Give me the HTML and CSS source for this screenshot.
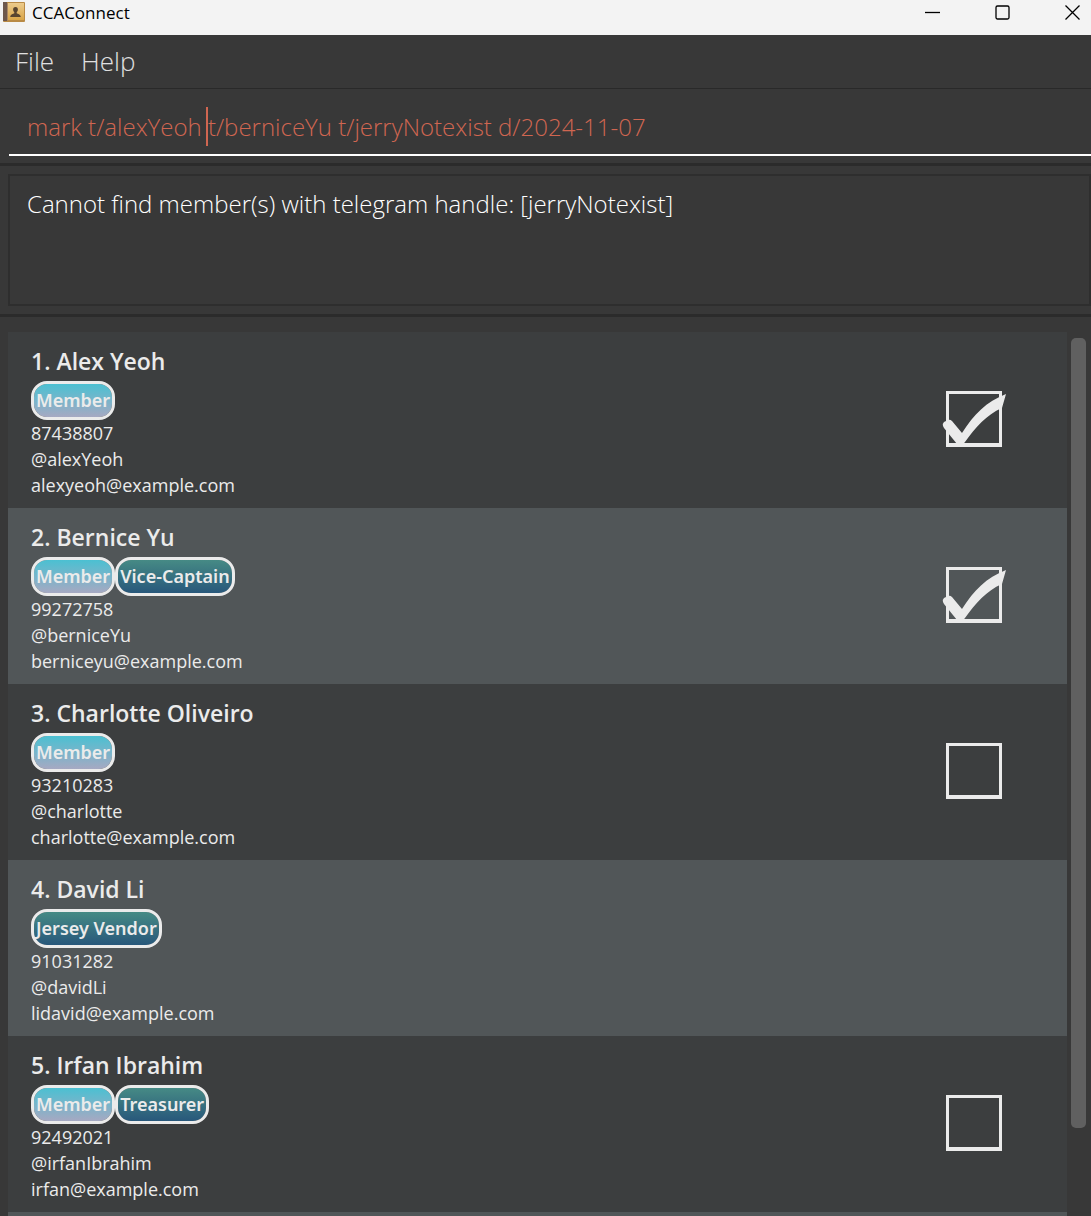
FILE: index.html
```html
<!DOCTYPE html>
<html lang="en">
<head>
<meta charset="utf-8">
<title>CCAConnect</title>
<link rel="stylesheet" href="styles.css">
</head>
<body>
<header class="titlebar">
  <svg class="app-icon" viewBox="0 0 22 20" aria-hidden="true">
    <defs><linearGradient id="cover" x1="0" y1="0" x2="0" y2="1"><stop offset="0" stop-color="#eccb8c"/><stop offset="1" stop-color="#d9a548"/></linearGradient></defs>
    <rect x="0" y="0" width="22" height="20" rx="1" fill="#b98a45"/>
    <rect x="0" y="0" width="4" height="19" fill="#6d574b"/>
    <rect x="4" y="1" width="1" height="18" fill="#a98763"/>
    <rect x="5" y="1" width="16" height="17" fill="url(#cover)"/>
    <path d="M12.500 5c1.700 0 2.500 1.200 2.400 2.700-.1 1.300-.7 2-1.200 2.500v1c1 .6 3.800.8 4.100 3.800H7.200c.3-3 3.100-3.200 4.100-3.800v-1c-.5-.5-1.100-1.200-1.200-2.500C10 6.200 10.800 5 12.500 5z" fill="#59452f"/>
  </svg>
  <h1 class="app-title">CCAConnect</h1>
  <div class="window-controls">
    <button type="button" aria-label="Minimize"><svg viewBox="0 0 16 16"><path d="M0 8.500h15"/></svg></button>
    <button type="button" aria-label="Maximize"><svg viewBox="0 0 16 16"><rect x="1" y="2" width="13" height="13" rx="1.500"/></svg></button>
    <button type="button" aria-label="Close"><svg viewBox="0 0 16 16"><path d="M.5 1.500l14 14M14.500 1.500l-14 14"/></svg></button>
  </div>
</header>
<nav class="menubar">
  <button type="button">File</button>
  <button type="button">Help</button>
</nav>
<section class="command">
  <div class="command-field">
    <input class="command-input" type="text" aria-label="Command" spellcheck="false" value="mark t/alexYeoh t/berniceYu t/jerryNotexist d/2024-11-07">
    <span class="caret"></span>
  </div>
</section>
<section class="result">
  <textarea class="result-text" aria-label="Result" readonly>Cannot find member(s) with telegram handle: [jerryNotexist]</textarea>
</section>
<main class="people">
  <ol class="list">
    <li class="person">
      <div class="details">
        <h2>1. Alex Yeoh</h2>
        <div class="tags"><span class="tag member">Member</span></div>
        <p>87438807</p><p>@alexYeoh</p><p>alexyeoh@example.com</p>
      </div>
      <label class="attendance"><input type="checkbox" aria-label="Alex Yeoh attended" checked><svg viewBox="0 0 66 58" aria-hidden="true"><path d="M1 35Q0 33 2 31L6 29Q8 28 10 30L20 42C32 23 44 11 64 3L60 17C44 24 34 36 23 51Q19 57 15 53L2 37z"/></svg></label>
    </li>
    <li class="person">
      <div class="details">
        <h2>2. Bernice Yu</h2>
        <div class="tags"><span class="tag member">Member</span><span class="tag">Vice-Captain</span></div>
        <p>99272758</p><p>@berniceYu</p><p>berniceyu@example.com</p>
      </div>
      <label class="attendance"><input type="checkbox" aria-label="Bernice Yu attended" checked><svg viewBox="0 0 66 58" aria-hidden="true"><path d="M1 35Q0 33 2 31L6 29Q8 28 10 30L20 42C32 23 44 11 64 3L60 17C44 24 34 36 23 51Q19 57 15 53L2 37z"/></svg></label>
    </li>
    <li class="person">
      <div class="details">
        <h2>3. Charlotte Oliveiro</h2>
        <div class="tags"><span class="tag member">Member</span></div>
        <p>93210283</p><p>@charlotte</p><p>charlotte@example.com</p>
      </div>
      <label class="attendance"><input type="checkbox" aria-label="Charlotte Oliveiro attended"></label>
    </li>
    <li class="person">
      <div class="details">
        <h2>4. David Li</h2>
        <div class="tags"><span class="tag">Jersey Vendor</span></div>
        <p>91031282</p><p>@davidLi</p><p>lidavid@example.com</p>
      </div>
    </li>
    <li class="person">
      <div class="details">
        <h2>5. Irfan Ibrahim</h2>
        <div class="tags"><span class="tag member">Member</span><span class="tag">Treasurer</span></div>
        <p>92492021</p><p>@irfanIbrahim</p><p>irfan@example.com</p>
      </div>
      <label class="attendance"><input type="checkbox" aria-label="Irfan Ibrahim attended"></label>
    </li>
    <li class="person"></li>
  </ol>
  <div class="scrollbar"><div class="thumb"></div></div>
</main>
</body>
</html>
```

FILE: styles.css
```css
* { box-sizing: border-box; }

body {
  margin: 0;
  height: 100vh;
  overflow: hidden;
  display: flex;
  flex-direction: column;
  background: #383838;
  color: #ebebeb;
  font-family: "Open Sans", "Noto Sans", sans-serif;
}

h1, h2, p, ol { margin: 0; padding: 0; }
button, input, textarea { font-family: inherit; }
button { border: 0; padding: 0; background: none; color: inherit; }

.titlebar {
  flex: none;
  display: flex;
  align-items: flex-start;
  height: 35px;
  padding: 2px 0 0 3px;
  background: #f3f3f3;
  color: #000;
}
.app-icon { width: 22px; height: 20px; }
.app-title { margin-left: 7px; font-size: 17px; font-weight: 400; line-height: 22px; }
.window-controls { display: flex; gap: 54px; margin-left: auto; padding: 2px 10px 0 0; }
.window-controls button { width: 16px; height: 16px; }
.window-controls svg { display: block; width: 16px; height: 16px; fill: none; stroke: #000; stroke-width: 1.300; }

.menubar {
  flex: none;
  display: flex;
  align-items: flex-start;
  gap: 27px;
  height: 54px;
  padding: 0 15px;
  border-bottom: 1px solid #292929;
}
.menubar button { font-size: 26px; font-weight: 300; line-height: 52px; color: #e0e0e0; }

.command {
  flex: none;
  padding: 9px 0 7px 9px;
  border-bottom: 3px solid #2b2b2b;
}
.command-field { position: relative; }
.command-input {
  display: block;
  width: 100%;
  height: 58px;
  padding: 0 18px;
  border: 0;
  border-bottom: 2px solid #fff;
  outline: 0;
  background: none;
  color: #d06651;
  font-size: 24px;
  font-weight: 300;
}
.caret { position: absolute; left: 197px; top: 9px; width: 2px; height: 39px; background: #d06651; }

.result {
  flex: none;
  padding: 8px 0 8px 8px;
  border-bottom: 3px solid #2b2b2b;
}
.result-text {
  display: block;
  width: 100%;
  height: 132px;
  padding: 11px 17px;
  border: 2px solid #2e2e2e;
  outline: 0;
  resize: none;
  background: none;
  color: #fff;
  font-size: 24px;
  font-weight: 300;
  line-height: 34px;
}

.people { flex: 1; min-height: 0; display: flex; padding: 15px 5px 0 8px; }
.list { flex: 1; list-style: none; overflow: hidden; }
.person {
  display: flex;
  justify-content: space-between;
  min-height: 176px;
  padding: 13px 61px 10px 23px;
  background: #3c3e3f;
}
.person:nth-child(even) { background: #515658; }
.person h2 { font-size: 23px; font-weight: 600; line-height: 32px; margin-bottom: 4px; }
.person p { font-size: 18px; line-height: 26px; }
.tags { display: flex; }
.tag {
  height: 39px;
  padding: 0 2px;
  border: 3px solid #ebebeb;
  border-radius: 16px;
  background: linear-gradient(#468a85, #28587b) padding-box;
  font-family: "Noto Sans", sans-serif;
  font-size: 18px;
  font-weight: 600;
  line-height: 32px;
}
.tag.member { background: linear-gradient(#4bc0d2, #a6a9c2) padding-box; }

.attendance { position: relative; width: 60px; height: 58px; margin-top: 46px; }
.attendance input {
  appearance: none;
  display: block;
  width: 56px;
  height: 56px;
  margin: 0;
  border: 4px solid #ebebeb;
  border-width: 3px 3px 4px;
}
.attendance svg { position: absolute; left: -4px; top: 0; width: 66px; height: 58px; fill: #ebebeb; }

.scrollbar { width: 15px; margin-left: 4px; padding-top: 6px; }
.thumb { height: 90%; border-radius: 5px; background: #606060; }
```
